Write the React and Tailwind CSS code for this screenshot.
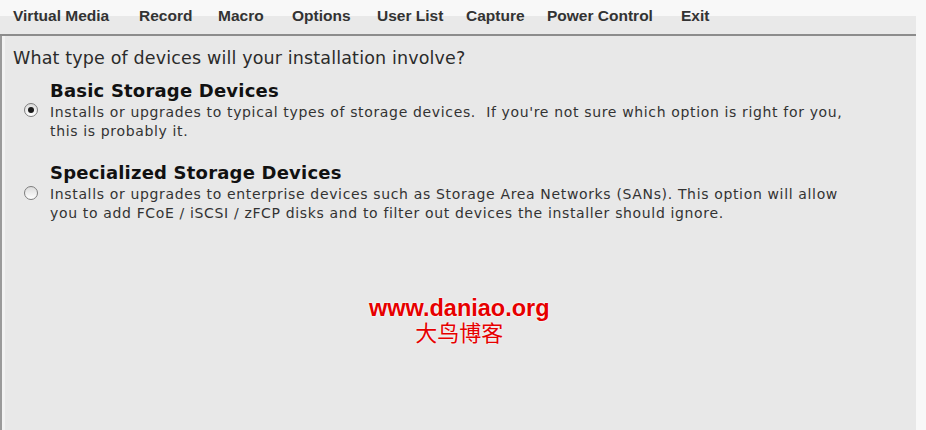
import React from 'react';

const menuItems = [
  { label: 'Virtual Media', w: 'w-[126px]' },
  { label: 'Record', w: 'w-[79px]' },
  { label: 'Macro', w: 'w-[74px]' },
  { label: 'Options', w: 'w-[85px]' },
  { label: 'User List', w: 'w-[89px]' },
  { label: 'Capture', w: 'w-[81px]' },
  { label: 'Power Control', w: 'w-[134px]' },
  { label: 'Exit', w: 'w-[60px]' },
];

const options = [
  {
    title: 'Basic Storage Devices',
    lines: [
      "Installs or upgrades to typical types of storage devices.  If you're not sure which option is right for you,",
      'this is probably it.',
    ],
    checked: true,
  },
  {
    title: 'Specialized Storage Devices',
    lines: [
      'Installs or upgrades to enterprise devices such as Storage Area Networks (SANs). This option will allow',
      'you to add FCoE / iSCSI / zFCP disks and to filter out devices the installer should ignore.',
    ],
    checked: false,
  },
];

const Radio = ({ checked }) => (
  <div className="w-[14px] h-[14px] rounded-full border border-[#7d7d7d] bg-gradient-to-b from-[#dcdcdc] to-white flex items-center justify-center shrink-0">
    {checked && <div className="w-[6px] h-[6px] rounded-full bg-[#1a1a1a]"></div>}
  </div>
);

const App = () => {
  return (
    <div className="w-[926px] h-[430px] bg-[#f8f8f8] flex flex-col overflow-hidden">
      {/* Menu bar */}
      <div className="w-[916px] h-[36px] flex flex-col">
        <div className="h-[16px] bg-[#f8f8f8]"></div>
        <div className="h-[18px] bg-[#e9e9e9]"></div>
        <div className="h-[2px] bg-[#8c8c8c]"></div>
      </div>
      <div className="absolute top-0 left-0 h-[32px] flex items-center pl-[13px] font-['Liberation_Sans',Arial,sans-serif] text-[15.5px] font-bold text-[#333]">
        {menuItems.map((item) => (
          <div key={item.label} className={`${item.w} shrink-0`}>
            {item.label}
          </div>
        ))}
      </div>

      {/* Installer panel */}
      <div className="w-[916px] flex-1 flex bg-[#e8e8e8]">
        <div className="w-[2px] bg-[#9a9a9a]"></div>
        <div className="w-[3px] bg-[#f2f2f2]"></div>
        <div className="flex-1 flex flex-col font-['DejaVu_Sans',sans-serif] text-[#2b2b2b] pl-[8px] pt-[11px] relative">
          <p className="text-[17.5px] leading-[22px] tracking-[0.15px]">What type of devices will your installation involve?</p>
          <div className="flex flex-col gap-[20px] mt-[10px]">
            {options.map((opt, i) => (
              <div key={opt.title} className="flex flex-col">
                <p className="pl-[37px] text-[18px] font-bold leading-[24px] tracking-[0.2px] text-[#111]">{opt.title}</p>
                <div className="flex">
                  <div className={`w-[37px] pl-[11px] shrink-0 ${i === 0 ? 'pt-0' : 'pt-[1px]'}`}>
                    <Radio checked={opt.checked} />
                  </div>
                  <div className="text-[14px] leading-[19px] tracking-[0.65px] text-[#333]">
                    {opt.lines.map((l) => (
                      <p key={l} className="whitespace-pre">{l}</p>
                    ))}
                  </div>
                </div>
              </div>
            ))}
          </div>

          {/* Watermark */}
          <div className="absolute left-[364px] top-[258px] flex flex-col items-center text-[#e60000]">
            <p className="font-['Liberation_Sans',Arial,sans-serif] font-bold text-[23.5px] leading-[28px] [text-shadow:0_0_2px_#fff,0_0_2px_#fff]">
              www.daniao.org
            </p>
            <p className="font-['Liberation_Serif','Noto_Sans_CJK_SC',serif] text-[22px] leading-[24px] [text-shadow:0_0_2px_#fff]">
              大鸟博客
            </p>
          </div>
        </div>
      </div>
    </div>
  );
};

export default App;
